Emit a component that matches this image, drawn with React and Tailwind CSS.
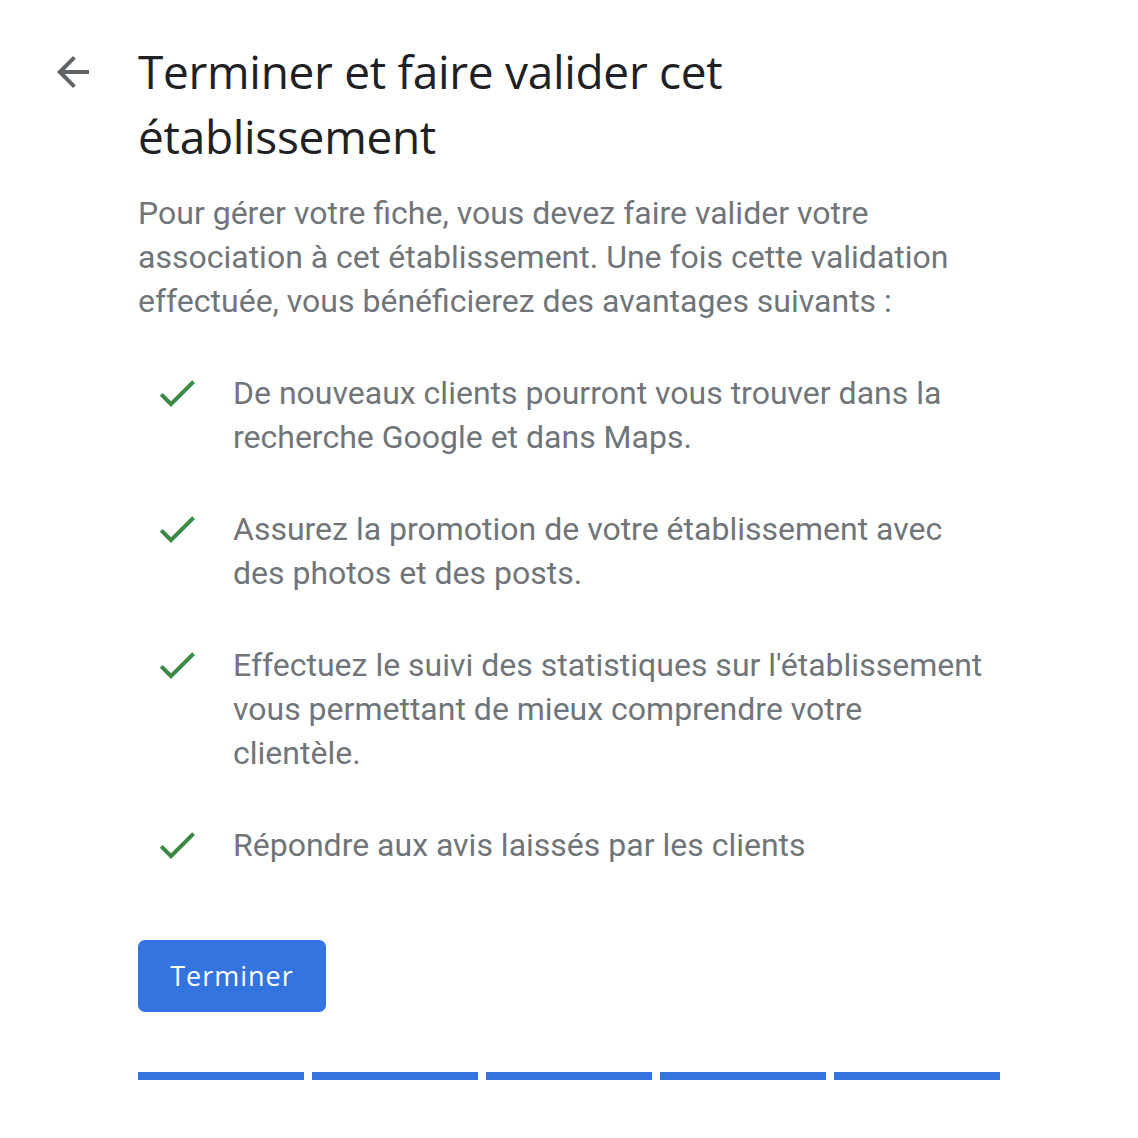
import React from "react";

const items = [
  "De nouveaux clients pourront vous trouver dans la recherche Google et dans Maps.",
  "Assurez la promotion de votre établissement avec des photos et des posts.",
  "Effectuez le suivi des statistiques sur l'établissement vous permettant de mieux comprendre votre clientèle.",
  "Répondre aux avis laissés par les clients",
];

const CheckIcon = () => (
  <svg viewBox="0 0 24 24" className="w-12 h-12 shrink-0 -mt-[2px]" fill="#3a8a45">
    <path d="M9 16.17L4.83 12l-1.42 1.41L9 19 21 7l-1.41-1.41z" />
  </svg>
);

export default function App() {
  return (
    <div className="min-h-[1138px] bg-white flex" style={{ fontFamily: "Roboto, 'Noto Sans', sans-serif" }}>
      {/* Back arrow column */}
      <div className="w-[138px] shrink-0 pt-12 pl-[49px]">
        <svg viewBox="0 0 24 24" className="w-12 h-12" fill="#5f6368">
          <path d="M20 11H7.83l5.59-5.59L12 4l-8 8 8 8 1.41-1.41L7.83 13H20v-2z" />
        </svg>
      </div>

      {/* Content */}
      <div className="w-[862px] pt-[39px]">
        <h1
          className="text-[46px] leading-[65px] text-[#202124] font-normal pr-[100px]"
          style={{ fontFamily: "'Open Sans', sans-serif", letterSpacing: "-0.3px" }}
        >
          Terminer et faire valider cet établissement
        </h1>

        <p className="mt-[22px] max-w-[850px] text-[32px] leading-[44px] text-[#70757a]">
          Pour gérer votre fiche, vous devez faire valider votre association à cet établissement. Une fois cette validation effectuée, vous bénéficierez des avantages suivants :
        </p>

        <ul className="mt-12 flex flex-col gap-12">
          {items.map((t) => (
            <li key={t} className="flex gap-8 pl-[15px]">
              <CheckIcon />
              <span className="w-[756px] text-[32px] leading-[44px] text-[#70757a]">{t}</span>
            </li>
          ))}
        </ul>

        <button
          className="mt-[71px] w-[188px] h-[72px] rounded-[7px] bg-[#3474e0] text-white text-[27px] tracking-[1px]"
          style={{ fontFamily: "'Open Sans', sans-serif" }}
        >
          Terminer
        </button>

        <div className="mt-[60px] flex gap-2">
          <div className="h-2 flex-1 bg-[#3474e0]" />
          <div className="h-2 flex-1 bg-[#3474e0]" />
          <div className="h-2 flex-1 bg-[#3474e0]" />
          <div className="h-2 flex-1 bg-[#3474e0]" />
          <div className="h-2 flex-1 bg-[#3474e0]" />
        </div>
      </div>
    </div>
  );
}
